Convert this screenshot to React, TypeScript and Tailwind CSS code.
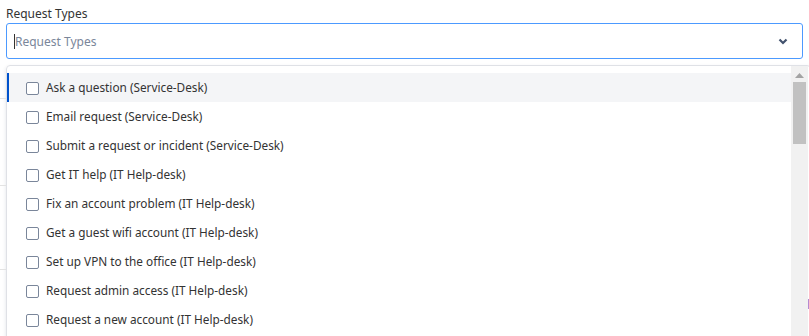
import React from "react";

const items = [
  "Ask a question (Service-Desk)",
  "Email request (Service-Desk)",
  "Submit a request or incident (Service-Desk)",
  "Get IT help (IT Help-desk)",
  "Fix an account problem (IT Help-desk)",
  "Get a guest wifi account (IT Help-desk)",
  "Set up VPN to the office (IT Help-desk)",
  "Request admin access (IT Help-desk)",
  "Request a new account (IT Help-desk)",
];

export default function App() {
  return (
    <div
      className="relative w-[809px] h-[336px] overflow-hidden bg-white text-[#333333]"
      style={{ fontFamily: '"Noto Sans", "Open Sans", sans-serif' }}
    >
      {/* faint background page lines peeking out */}
      <div className="absolute left-0 top-[98px] w-[6px] h-px bg-[#e3e3e3]" />
      <div className="absolute left-0 top-[185px] w-[6px] h-px bg-[#e3e3e3]" />
      <div className="absolute left-0 top-[269px] w-[6px] h-px bg-[#e3e3e3]" />
      <div className="absolute right-0 top-[299px] w-px h-[10px] bg-[#b58ad1]" />

      <div className="px-[6px] pt-[5px]">
        <div className="text-[12px] leading-[17px] h-[18px]">Request Types</div>
        <div className="h-[36px] border border-[#4c9aff] rounded-[3px] flex items-center pl-[7px] pr-[14px]">
          <span className="w-px h-[15px] bg-[#333]" />
          <span className="text-[12px] text-[#7a869a] flex-1 pt-[2px]">Request Types</span>
          <svg width="10" height="7" viewBox="0 0 10 7">
            <path d="M1.5 1.5 L5 5 L8.5 1.5" fill="none" stroke="#42526e" strokeWidth="2.2" />
          </svg>
        </div>
        <div className="mt-[6px] h-[300px] border border-[#dfe1e6] rounded-[4px] shadow-[0_2px_4px_rgba(9,30,66,0.12)] flex w-[805px]">
          <div className="flex-1 pt-[7px] flex flex-col">
            {items.map((t, i) => (
              <div
                key={t}
                className={
                  "h-[29px] flex items-center gap-[7px] pl-[17px] pt-[1px] border-l-2 text-[11.8px] " +
                  (i === 0 ? "bg-[#f4f5f7] border-[#0052cc]" : "border-transparent")
                }
              >
                <span className="w-[13px] h-[13px] border-[1.5px] border-[#7a869a] rounded-[2px] bg-white" />
                <span>{t}</span>
              </div>
            ))}
          </div>
          <div className="w-[17px] bg-[#f1f1f1] flex flex-col items-center mr-[2px]">
            <svg width="9" height="5" viewBox="0 0 9 5" className="mt-[7px]">
              <path d="M0 5 L4.5 0 L9 5 Z" fill="#a3a3a3" />
            </svg>
            <div className="mt-[4px] w-[13px] h-[62px] bg-[#c1c1c1]" />
            <div className="flex-1" />
            <svg width="9" height="5" viewBox="0 0 9 5" className="mb-[6px]">
              <path d="M0 0 L9 0 L4.5 5 Z" fill="#505050" />
            </svg>
          </div>
        </div>
      </div>
    </div>
  );
}
